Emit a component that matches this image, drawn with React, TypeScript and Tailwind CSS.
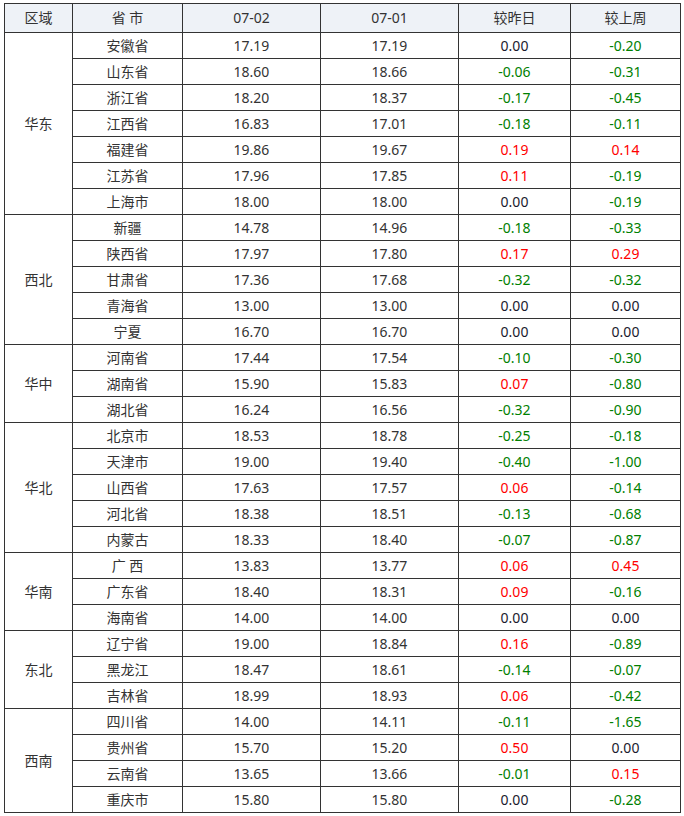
type Row = { p: string; a: string; b: string; d: string; w: string };

const groups: { region: string; rows: Row[] }[] = [
  {
    region: "华东",
    rows: [
      { p: "安徽省", a: "17.19", b: "17.19", d: "0.00", w: "-0.20" },
      { p: "山东省", a: "18.60", b: "18.66", d: "-0.06", w: "-0.31" },
      { p: "浙江省", a: "18.20", b: "18.37", d: "-0.17", w: "-0.45" },
      { p: "江西省", a: "16.83", b: "17.01", d: "-0.18", w: "-0.11" },
      { p: "福建省", a: "19.86", b: "19.67", d: "0.19", w: "0.14" },
      { p: "江苏省", a: "17.96", b: "17.85", d: "0.11", w: "-0.19" },
      { p: "上海市", a: "18.00", b: "18.00", d: "0.00", w: "-0.19" },
    ],
  },
  {
    region: "西北",
    rows: [
      { p: "新疆", a: "14.78", b: "14.96", d: "-0.18", w: "-0.33" },
      { p: "陕西省", a: "17.97", b: "17.80", d: "0.17", w: "0.29" },
      { p: "甘肃省", a: "17.36", b: "17.68", d: "-0.32", w: "-0.32" },
      { p: "青海省", a: "13.00", b: "13.00", d: "0.00", w: "0.00" },
      { p: "宁夏", a: "16.70", b: "16.70", d: "0.00", w: "0.00" },
    ],
  },
  {
    region: "华中",
    rows: [
      { p: "河南省", a: "17.44", b: "17.54", d: "-0.10", w: "-0.30" },
      { p: "湖南省", a: "15.90", b: "15.83", d: "0.07", w: "-0.80" },
      { p: "湖北省", a: "16.24", b: "16.56", d: "-0.32", w: "-0.90" },
    ],
  },
  {
    region: "华北",
    rows: [
      { p: "北京市", a: "18.53", b: "18.78", d: "-0.25", w: "-0.18" },
      { p: "天津市", a: "19.00", b: "19.40", d: "-0.40", w: "-1.00" },
      { p: "山西省", a: "17.63", b: "17.57", d: "0.06", w: "-0.14" },
      { p: "河北省", a: "18.38", b: "18.51", d: "-0.13", w: "-0.68" },
      { p: "内蒙古", a: "18.33", b: "18.40", d: "-0.07", w: "-0.87" },
    ],
  },
  {
    region: "华南",
    rows: [
      { p: "广 西", a: "13.83", b: "13.77", d: "0.06", w: "0.45" },
      { p: "广东省", a: "18.40", b: "18.31", d: "0.09", w: "-0.16" },
      { p: "海南省", a: "14.00", b: "14.00", d: "0.00", w: "0.00" },
    ],
  },
  {
    region: "东北",
    rows: [
      { p: "辽宁省", a: "19.00", b: "18.84", d: "0.16", w: "-0.89" },
      { p: "黑龙江", a: "18.47", b: "18.61", d: "-0.14", w: "-0.07" },
      { p: "吉林省", a: "18.99", b: "18.93", d: "0.06", w: "-0.42" },
    ],
  },
  {
    region: "西南",
    rows: [
      { p: "四川省", a: "14.00", b: "14.11", d: "-0.11", w: "-1.65" },
      { p: "贵州省", a: "15.70", b: "15.20", d: "0.50", w: "0.00" },
      { p: "云南省", a: "13.65", b: "13.66", d: "-0.01", w: "0.15" },
      { p: "重庆市", a: "15.80", b: "15.80", d: "0.00", w: "-0.28" },
    ],
  },
];

const tone = (v: string) => {
  const n = parseFloat(v);
  if (n > 0) return "text-[#ff0000]";
  if (n < 0) return "text-[#008000]";
  return "text-[#1a1a2e]";
};

const cell = "border border-[#333] p-0 text-center align-middle";

export default function App() {
  return (
    <div
      className="min-h-screen bg-white pt-[3px] pl-[4px] text-[14px] text-[#333]"
      style={{ fontFamily: '"Noto Sans", "Noto Sans CJK SC", sans-serif' }}
    >
      <table className="border-collapse table-fixed w-[676px] leading-none">
        <colgroup>
          <col className="w-[68px]" />
          <col className="w-[110px]" />
          <col className="w-[138px]" />
          <col className="w-[138px]" />
          <col className="w-[112px]" />
          <col className="w-[110px]" />
        </colgroup>
        <thead>
          <tr className="h-[29px] bg-[#eef2f7]">
            <th className={`${cell} font-normal`}>区域</th>
            <th className={`${cell} font-normal`}>省 市</th>
            <th className={`${cell} font-normal`}>07-02</th>
            <th className={`${cell} font-normal`}>07-01</th>
            <th className={`${cell} font-normal`}>较昨日</th>
            <th className={`${cell} font-normal`}>较上周</th>
          </tr>
        </thead>
        <tbody>
          {groups.map((g) =>
            g.rows.map((r, i) => (
              <tr key={g.region + r.p} className="h-[26px]">
                {i === 0 && (
                  <td className={cell} rowSpan={g.rows.length}>
                    {g.region}
                  </td>
                )}
                <td className={cell}>{r.p}</td>
                <td className={cell}>{r.a}</td>
                <td className={cell}>{r.b}</td>
                <td className={`${cell} ${tone(r.d)}`}>{r.d}</td>
                <td className={`${cell} ${tone(r.w)}`}>{r.w}</td>
              </tr>
            ))
          )}
        </tbody>
      </table>
    </div>
  );
}
